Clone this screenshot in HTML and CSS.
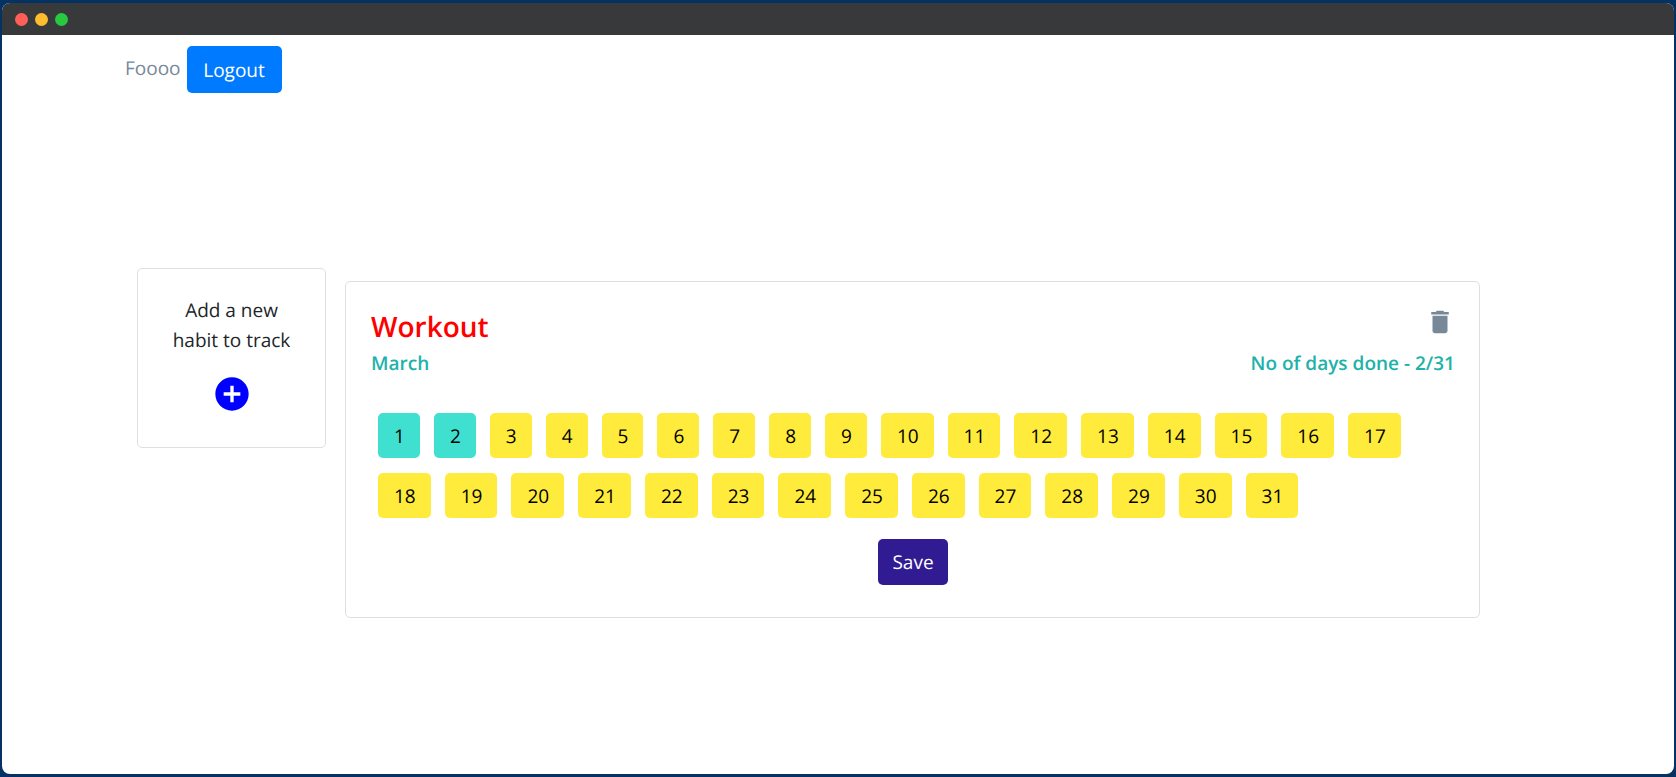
FILE: index.html
```html
<!DOCTYPE html>
<html lang="en">
<head>
<meta charset="utf-8">
<title>Habit Tracker</title>
<link rel="stylesheet" href="styles.css">
</head>
<body>
<div class="window">
  <div class="titlebar">
    <span class="dot dot-close"></span>
    <span class="dot dot-minimize"></span>
    <span class="dot dot-zoom"></span>
  </div>
  <header class="container navbar">
    <span class="username">Foooo</span>
    <button class="btn btn-logout" type="button">Logout</button>
  </header>
  <main class="container board">
    <section class="card add-card">
      <p class="add-text">Add a new habit to track</p>
      <button class="icon-btn" type="button" aria-label="Add habit">
        <svg class="add-icon" viewBox="0 0 24 24"><path fill="currentColor" d="M12 2C6.48 2 2 6.48 2 12s4.48 10 10 10 10-4.48 10-10S17.52 2 12 2zm5 11h-4v4h-2v-4H7v-2h4V7h2v4h4v2z"/></svg>
      </button>
    </section>
    <section class="card habit-card">
      <div class="habit-head">
        <h2 class="habit-name">Workout</h2>
        <button class="icon-btn" type="button" aria-label="Delete habit">
          <svg class="delete-icon" viewBox="0 0 24 24"><path fill="currentColor" d="M6 19c0 1.100.9 2 2 2h8c1.100 0 2-.9 2-2V7H6v12zM19 4h-3.500l-1-1h-5l-1 1H5v2h14V4z"/></svg>
        </button>
      </div>
      <div class="habit-meta">
        <span>March</span>
        <span>No of days done - 2/31</span>
      </div>
      <div class="days">
        <button class="day done" type="button">1</button>
        <button class="day done" type="button">2</button>
        <button class="day" type="button">3</button>
        <button class="day" type="button">4</button>
        <button class="day" type="button">5</button>
        <button class="day" type="button">6</button>
        <button class="day" type="button">7</button>
        <button class="day" type="button">8</button>
        <button class="day" type="button">9</button>
        <button class="day" type="button">10</button>
        <button class="day" type="button">11</button>
        <button class="day" type="button">12</button>
        <button class="day" type="button">13</button>
        <button class="day" type="button">14</button>
        <button class="day" type="button">15</button>
        <button class="day" type="button">16</button>
        <button class="day" type="button">17</button>
        <button class="day" type="button">18</button>
        <button class="day" type="button">19</button>
        <button class="day" type="button">20</button>
        <button class="day" type="button">21</button>
        <button class="day" type="button">22</button>
        <button class="day" type="button">23</button>
        <button class="day" type="button">24</button>
        <button class="day" type="button">25</button>
        <button class="day" type="button">26</button>
        <button class="day" type="button">27</button>
        <button class="day" type="button">28</button>
        <button class="day" type="button">29</button>
        <button class="day" type="button">30</button>
        <button class="day" type="button">31</button>
      </div>
      <button class="btn btn-save" type="button">Save</button>
    </section>
  </main>
</div>
</body>
</html>
```
FILE: styles.css
```css
* { box-sizing: border-box; }

body {
  margin: 0;
  min-height: 100vh;
  display: flex;
  padding: 3px 2px;
  background: #043263;
  color: #212529;
  font-family: "Segoe UI", "Open Sans", "Noto Sans", sans-serif;
  font-size: 19px;
  line-height: 30px;
  text-rendering: geometricPrecision;
}

button {
  font: inherit;
  text-rendering: inherit;
  border: 0;
  cursor: pointer;
}

.window {
  flex: 1;
  background: #fff;
  border-radius: 8px;
  overflow: hidden;
}

.titlebar {
  display: flex;
  align-items: center;
  gap: 7px;
  height: 32px;
  padding: 0 13px;
  background: #38393a;
}

.dot {
  width: 13px;
  height: 13px;
  border-radius: 50%;
}

.dot-close { background: #ff5f57; }
.dot-minimize { background: #febc2e; }
.dot-zoom { background: #28c840; }

.container {
  max-width: 1426px;
  margin: 0 auto;
}

.navbar {
  display: flex;
  align-items: center;
  gap: 6px;
  padding-top: 11px;
}

.username {
  color: #778899;
  padding-bottom: 4px;
}

.btn {
  padding: 8px 16px;
  border-radius: 5px;
  color: #fff;
}

.btn-logout {
  min-width: 95px;
  min-height: 47px;
  background: #007bff;
}

.board {
  display: flex;
  align-items: flex-start;
  gap: 19px;
  padding: 175px 71px 0 12px;
}

.card {
  border: 1px solid #dfdfdf;
  border-radius: 5px;
}

.add-card {
  flex: none;
  width: 189px;
  padding: 26px 30px 33px;
  text-align: center;
}

.add-text { margin: 0 0 19px; }

.icon-btn {
  display: inline-block;
  vertical-align: top;
  padding: 0;
  background: none;
}

.add-icon {
  display: block;
  width: 40px;
  height: 40px;
  color: #00f;
}

.habit-card {
  flex: 1;
  margin-top: 13px;
  padding: 25px 24px 32px 25px;
  display: flex;
  flex-direction: column;
}

.habit-head {
  display: flex;
  justify-content: space-between;
  align-items: flex-start;
  height: 41px;
}

.habit-name {
  margin: 0;
  color: #f00;
  font-size: 28px;
  font-weight: 600;
  line-height: 40px;
}

.delete-icon {
  display: block;
  width: 30px;
  height: 30px;
  color: #778899;
}

.habit-meta {
  display: flex;
  justify-content: space-between;
  color: #20b2aa;
  font-weight: 600;
}

.days {
  display: flex;
  flex-wrap: wrap;
  gap: 15px 14px;
  padding: 35px 7px 21px;
}

.day {
  height: 45px;
  padding: 0 15px 0 16px;
  border-radius: 5px;
  background: #ffeb3b;
  color: #000;
}

.day.done { background: #40e0d0; }

.btn-save {
  align-self: center;
  padding: 8px 14px;
  background: #311b92;
}
```
